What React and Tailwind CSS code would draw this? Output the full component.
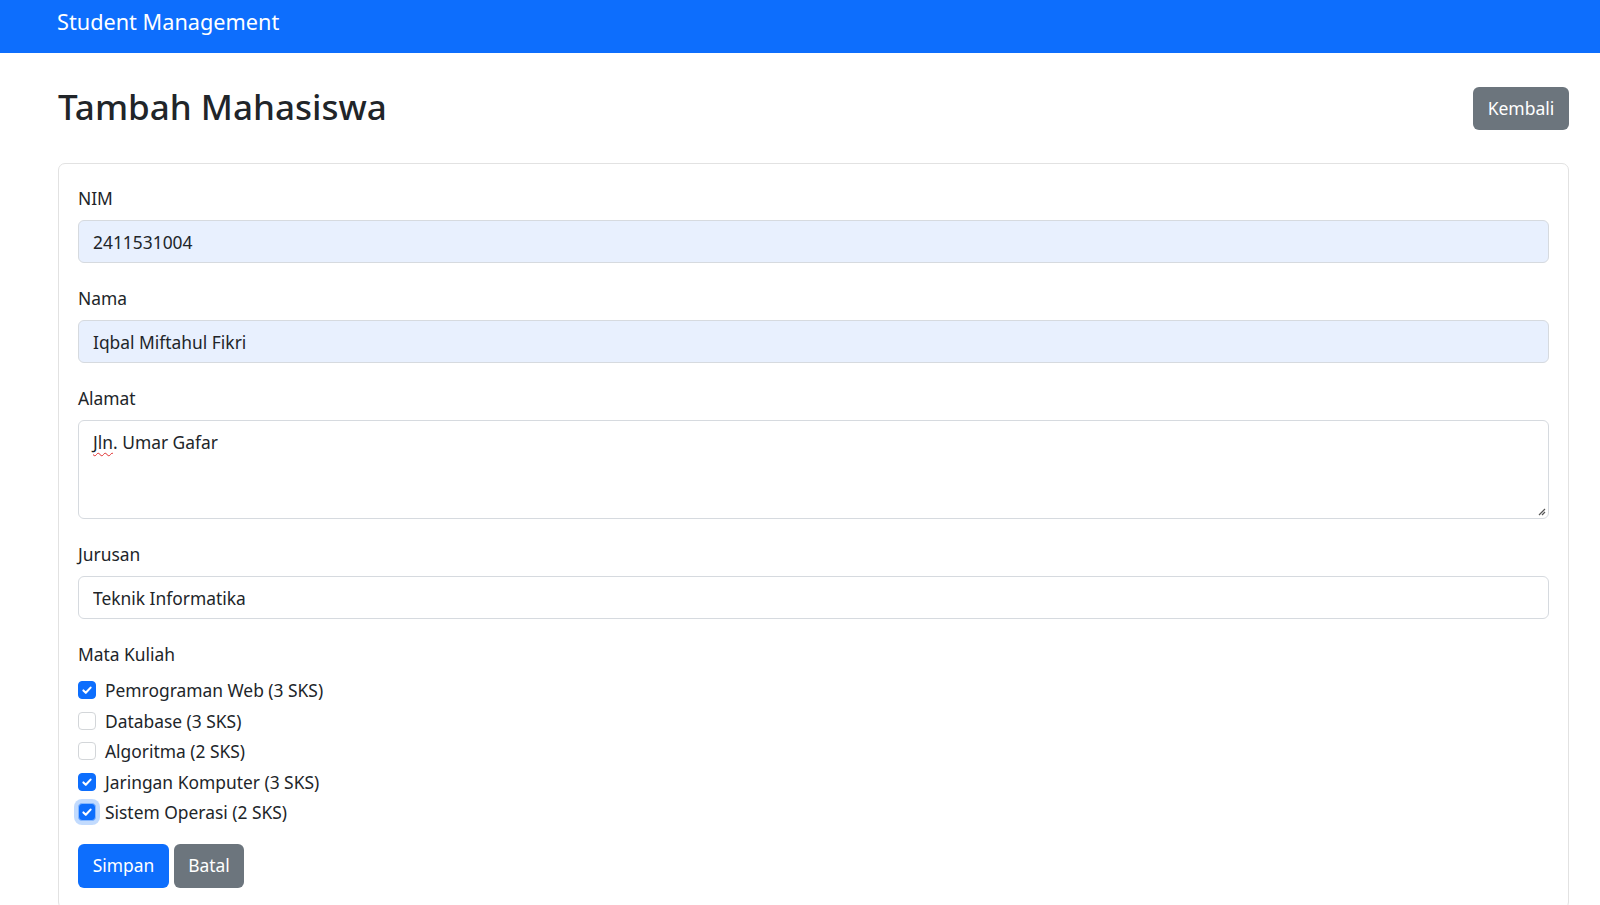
import { useState } from "react";

const courses = [
  { name: "Pemrograman Web (3 SKS)", checked: true },
  { name: "Database (3 SKS)", checked: false },
  { name: "Algoritma (2 SKS)", checked: false },
  { name: "Jaringan Komputer (3 SKS)", checked: true },
  { name: "Sistem Operasi (2 SKS)", checked: true, focus: true },
];

function Check({ checked, focus }) {
  return (
    <span
      className={`flex h-[18px] w-[18px] shrink-0 items-center justify-center rounded-[4px] border ${
        checked ? "border-[#0d6efd] bg-[#0d6efd]" : "border-[#d3d6d9] bg-white"
      } ${focus ? "shadow-[0_0_0_4px_rgba(13,110,253,0.25)] border-[#86b7fe]" : ""}`}
    >
      {checked && (
        <svg width="16" height="16" viewBox="0 0 20 20" fill="none">
          <path d="M5.5 10.5l3 3L14.5 7" stroke="#fff" strokeWidth="2.6" strokeLinecap="round" strokeLinejoin="round" />
        </svg>
      )}
    </span>
  );
}

export default function App() {
  const [items, setItems] = useState(courses);

  const toggle = (i) =>
    setItems(items.map((c, j) => (j === i ? { ...c, checked: !c.checked } : c)));

  return (
    <div className="min-h-screen bg-white font-['Noto_Sans',sans-serif] text-[#212529]">
      {/* NAVBAR */}
      <nav className="flex h-[53px] items-center bg-[#0d6efd] pl-[57px] pb-[8px]">
        <span className="text-[21.7px] text-white">Student Management</span>
      </nav>

      <div className="pl-[58px] pr-[31px]">
        {/* HEADER */}
        <div className="mt-[34px] mb-[33px] flex items-start justify-between">
          <h2 className="text-[35px] font-medium leading-[39px]">Tambah Mahasiswa</h2>
          <button className="h-[43px] w-[96px] rounded-[6px] bg-[#6c757d] text-[17.5px] text-white">
            Kembali
          </button>
        </div>

        {/* FORM CARD */}
        <div className="rounded-[7px] border border-[#e2e2e2] px-[19px] pt-[21px] pb-[20px] text-[17.4px]">
          <label className="mb-[8px] block leading-[27px]">NIM</label>
          <input
            readOnly
            value="2411531004"
            className="mb-[22px] block h-[43px] w-full rounded-[6px] border border-[#d6dadf] bg-[#e8f0fe] px-[14px] outline-none"
          />

          <label className="mb-[8px] block leading-[27px]">Nama</label>
          <input
            readOnly
            value="Iqbal Miftahul Fikri"
            className="mb-[22px] block h-[43px] w-full rounded-[6px] border border-[#d6dadf] bg-[#e8f0fe] px-[14px] outline-none"
          />

          <label className="mb-[8px] block leading-[27px]">Alamat</label>
          <div className="relative mb-[22px] h-[99px] w-full rounded-[6px] border border-[#d6dadf] px-[14px] py-[8px] leading-[27px]">
            <span className="underline decoration-wavy decoration-[#e03131] decoration-1 underline-offset-[3px]">Jln</span>
            . Umar Gafar
            <svg className="absolute right-[2px] bottom-[2px]" width="9" height="9" viewBox="0 0 9 9">
              <path d="M8 2L2 8M8 5L5 8" stroke="#555" strokeWidth="1.2" />
            </svg>
          </div>

          <label className="mb-[8px] block leading-[27px]">Jurusan</label>
          <input
            readOnly
            value="Teknik Informatika"
            className="mb-[22px] block h-[43px] w-full rounded-[6px] border border-[#d6dadf] bg-white px-[14px] outline-none"
          />

          <label className="mb-[7px] block leading-[27px]">Mata Kuliah</label>
          <div className="mb-[16px] flex flex-col">
            {items.map((c, i) => (
              <div
                key={c.name}
                onClick={() => toggle(i)}
                className="flex h-[30.5px] cursor-pointer items-center gap-[9px]"
              >
                <Check checked={c.checked} focus={c.focus} />
                <span>{c.name}</span>
              </div>
            ))}
          </div>

          <div className="flex gap-[5px]">
            <button className="h-[44px] w-[91px] rounded-[6px] bg-[#0d6efd] text-white">Simpan</button>
            <button className="h-[44px] w-[70px] rounded-[6px] bg-[#6c757d] text-white">Batal</button>
          </div>
        </div>
      </div>
    </div>
  );
}
